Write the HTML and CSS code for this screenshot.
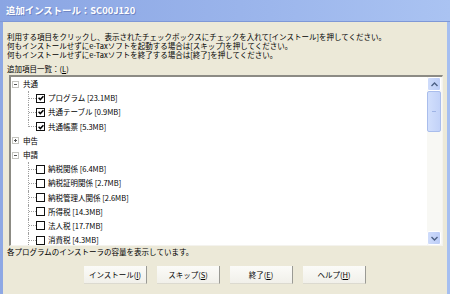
FILE: index.html
```html
<!DOCTYPE html>
<html>
<head>
	<title>追加インストール</title>
	<link rel="stylesheet" href="styles.css">
</head>
<body>
	<div class="window">
		<div class="titlebar">追加インストール：SC00J120</div>
		<div class="content">
			<p class="intro">
				利用する項目をクリックし、表示されたチェックボックスにチェックを入れて[インストール]を押してください。<br>
				何もインストールせずにe-Taxソフトを起動する場合は[スキップ]を押してください。<br>
				何もインストールせずにe-Taxソフトを終了する場合は[終了]を押してください。
			</p>
			<div class="label">追加項目一覧：(<u>L</u>)</div>

			<div class="listbox">
				<div class="tree">
					<div class="row top"><span class="exp minus"></span><span class="name">共通</span></div>
					<div class="group">
						<div class="row"><span class="stub"></span><span class="chk on"></span><span class="name">プログラム [23.1MB]</span></div>
						<div class="row"><span class="stub"></span><span class="chk on"></span><span class="name">共通テーブル [0.9MB]</span></div>
						<div class="row last"><span class="stub"></span><span class="chk on"></span><span class="name">共通帳票 [5.3MB]</span></div>
					</div>
					<div class="row top"><span class="exp plus"></span><span class="name">申告</span></div>
					<div class="row top"><span class="exp minus"></span><span class="name">申請</span></div>
					<div class="group">
						<div class="row"><span class="stub"></span><span class="chk"></span><span class="name">納税関係 [6.4MB]</span></div>
						<div class="row"><span class="stub"></span><span class="chk"></span><span class="name">納税証明関係 [2.7MB]</span></div>
						<div class="row"><span class="stub"></span><span class="chk"></span><span class="name">納税管理人関係 [2.6MB]</span></div>
						<div class="row"><span class="stub"></span><span class="chk"></span><span class="name">所得税 [14.3MB]</span></div>
						<div class="row"><span class="stub"></span><span class="chk"></span><span class="name">法人税 [17.7MB]</span></div>
						<div class="row"><span class="stub"></span><span class="chk"></span><span class="name">消費税 [4.3MB]</span></div>
					</div>
				</div>
				<div class="scrollbar">
					<div class="sbtn">
						<svg width="7" height="5" viewBox="0 0 7 5"><path d="M0.5 4 L3.5 1 L6.5 4" fill="none" stroke="#4d6185" stroke-width="1.4"/></svg>
					</div>
					<div class="thumb"><span class="grip"></span></div>
					<div class="track"></div>
					<div class="sbtn">
						<svg width="7" height="5" viewBox="0 0 7 5"><path d="M0.5 1 L3.5 4 L6.5 1" fill="none" stroke="#4d6185" stroke-width="1.4"/></svg>
					</div>
				</div>
			</div>

			<div class="status">各プログラムのインストーラの容量を表示しています。</div>

			<div class="buttons">
				<button class="btn">インストール(<u>I</u>)</button>
				<button class="btn">スキップ(<u>S</u>)</button>
				<button class="btn">終了(<u>E</u>)</button>
				<button class="btn">ヘルプ(<u>H</u>)</button>
			</div>
		</div>
	</div>
</body>
</html>
```

FILE: styles.css
```css
/* dialog in the old XP look */
body {
	margin: 0;
	padding: 0;
	font-family: "Noto Sans CJK JP", "Liberation Sans", sans-serif;
	font-size: 7.5px;
	color: #000;
	overflow: hidden;
}
.window {
	width: 450px;
	height: 294px;
	box-sizing: border-box;
	background-color: #ece9d8;
	border-left: 3px solid #8ea8e4;
	border-right: 3px solid #a6bff0;
	display: flex;
	flex-direction: column;
}
.titlebar {
	height: 22px;
	line-height: 21px;
	margin-left: -3px;
	margin-right: -3px;
	padding-left: 6px;
	background: linear-gradient(to right, #8aa5e3, #9cb6ec 60%, #aac3f2);
	border-bottom: 1px solid #7f98d6;
	box-sizing: border-box;
	color: #fff;
	font-weight: bold;
	font-size: 9.4px;
	text-shadow: 1px 1px 0 #7086c4;
}
.content {
	flex: 1;
	padding: 10px 4px 0 4px;
	display: flex;
	flex-direction: column;
}
.intro {
	margin: 0;
	line-height: 9px;
}
.label {
	margin-top: 5px;
	line-height: 9px;
	height: 9px;
	margin-bottom: 2px;
}
.listbox {
	margin-left: 2px;
	height: 171px;
	width: 434px;
	box-sizing: border-box;
	border-top: 2px solid #8c8b84;
	border-left: 2px solid #8c8b84;
	border-right: 1px solid #f4f3ee;
	border-bottom: 1px solid #f4f3ee;
	background-color: #fff;
	display: flex;
}
.tree {
	flex: 1;
	overflow: hidden;
	padding-left: 1px;
}
.row {
	height: 14.2px;
	display: flex;
	align-items: center;
	white-space: nowrap;
}
.exp {
	width: 7px;
	height: 7px;
	box-sizing: border-box;
	border: 1px solid #c4c4bf;
	margin-right: 4px;
	display: flex;
	align-items: center;
	justify-content: center;
}
.exp::before {
	content: "";
	width: 3px;
	height: 1px;
	background-color: #555;
}
.exp.plus {
	background: linear-gradient(#555, #555) center / 1px 3px no-repeat;
}
.group {
	margin-left: 16px;
}
.stub {
	width: 7px;
	align-self: stretch;
	border-left: 1px dotted #a0a0a0;
	background: linear-gradient(to right, #a0a0a0 50%, transparent 50%) 0 50% / 2px 1px repeat-x;
}
.row.last .stub {
	align-self: flex-start;
	height: 50%;
	background-position: 0 100%;
}
.chk {
	width: 9px;
	height: 9px;
	box-sizing: border-box;
	border: 1.5px solid #111;
	margin-right: 3px;
}
.chk.on {
	background: url("data:image/svg+xml,%3Csvg xmlns='http://www.w3.org/2000/svg' width='6' height='6' viewBox='0 0 6 6'%3E%3Cpath d='M0.6 2.8 L2.3 4.6 L5.4 1.2' fill='none' stroke='%23000' stroke-width='1.5'/%3E%3C/svg%3E") center no-repeat;
}
.name {
	line-height: 10px;
}
.scrollbar {
	width: 14px;
	background-color: #f8f8f4;
	display: flex;
	flex-direction: column;
	padding-right: 1px;
}
.sbtn {
	height: 14px;
	box-sizing: border-box;
	border: 1px solid #fff;
	border-radius: 2px;
	background: linear-gradient(to right, #cfdcfb, #bccdf7);
	display: flex;
	align-items: center;
	justify-content: center;
}
.thumb {
	height: 41px;
	box-sizing: border-box;
	border: 1px solid #a9bdec;
	border-radius: 2px;
	background: linear-gradient(to right, #d2dffc, #c2d2f8);
	display: flex;
	align-items: center;
	justify-content: center;
}
.grip {
	width: 4px;
	height: 1px;
	background-color: #9fb4e6;
}
.track {
	flex: 1;
}
.status {
	line-height: 11px;
	height: 11px;
}
.buttons {
	margin-top: 9px;
	display: flex;
	justify-content: center;
	gap: 10px;
}
button.btn {
	width: 63px;
	height: 18px;
	padding: 0;
	font-family: inherit;
	font-size: 7.5px;
	color: #000;
	background: linear-gradient(#fbfbf8, #f1f0ea);
	border: none;
	border-right: 1px solid #9a9a94;
	border-bottom: 1px solid #dcdad0;
	border-radius: 0;
}
```
